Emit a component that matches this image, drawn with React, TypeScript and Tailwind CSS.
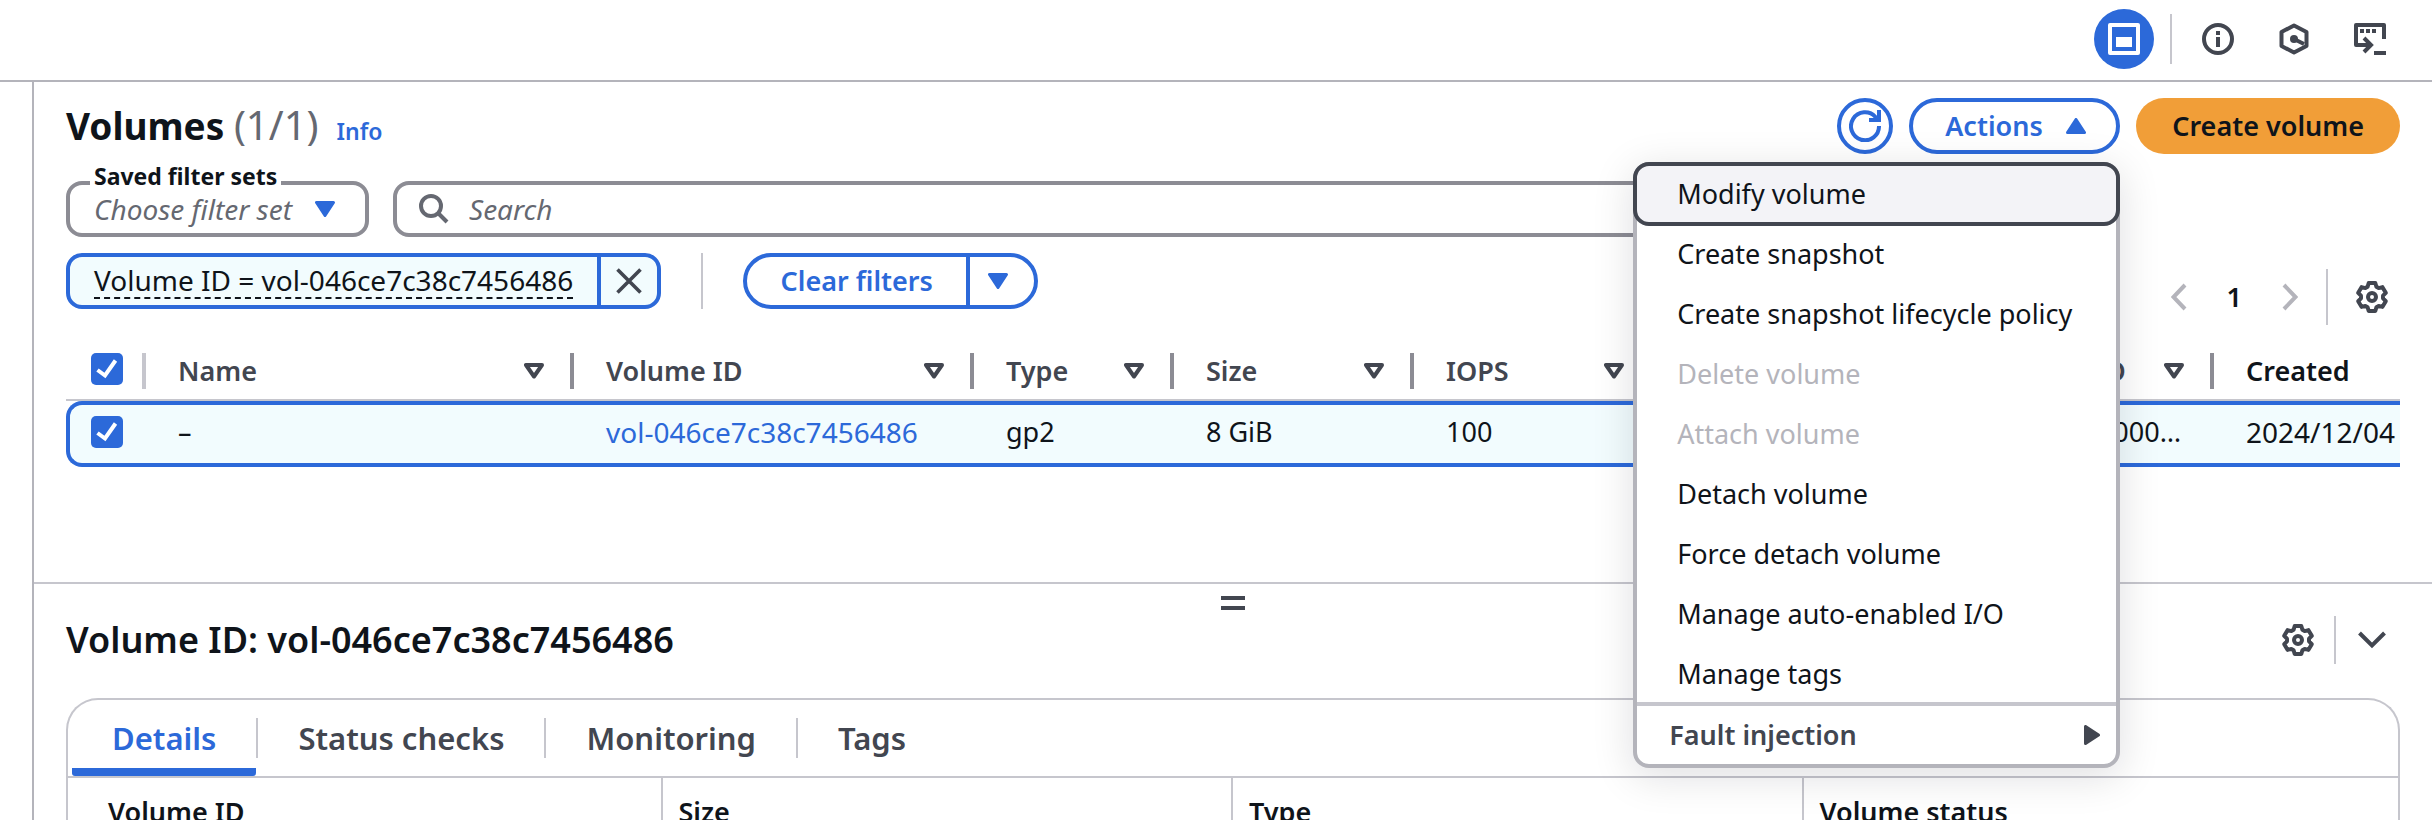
import React from "react";

type IconProps = { className?: string };

const gearPoints = Array.from({ length: 6 }, (_, i) => {
  const a = (i * Math.PI) / 3;
  return [
    [-4.4, -10.2],
    [-3.3, -14],
    [3.3, -14],
    [4.4, -10.2],
  ]
    .map(([x, y]) => {
      const px = 16 + x * Math.cos(a) - y * Math.sin(a);
      const py = 16 + x * Math.sin(a) + y * Math.cos(a);
      return `${px.toFixed(2)},${py.toFixed(2)}`;
    })
    .join(" ");
}).join(" ");

const GearIcon = () => (
  <svg viewBox="0 0 32 32" className="size-8" fill="none" stroke="currentColor" strokeWidth="4" strokeLinejoin="round">
    <polygon points={gearPoints} />
    <circle cx="16" cy="16" r="4" />
  </svg>
);

const Caret = ({ className = "" }: IconProps) => (
  <svg viewBox="0 0 20 16" className={`h-4 w-5 shrink-0 ${className}`} fill="currentColor" stroke="currentColor" strokeWidth="3" strokeLinejoin="round">
    <path d="M1.5 1.5H18.5L10 14.5Z" />
  </svg>
);

const SortIcon = () => (
  <svg viewBox="0 0 20 16" className="h-4 w-5 shrink-0" fill="none" stroke="currentColor" strokeWidth="4" strokeLinejoin="round">
    <path d="M2 2H18L10 13.5Z" />
  </svg>
);

const WindowIcon = () => (
  <svg viewBox="0 0 32 32" className="size-8" fill="none" stroke="currentColor" strokeWidth="4" strokeLinejoin="round">
    <path d="M2 2H30V30H2Z" />
    <path d="M8 14H24V24H8Z" fill="currentColor" stroke="none" />
  </svg>
);

const InfoIcon = () => (
  <svg viewBox="0 0 32 32" className="size-8" fill="none" stroke="currentColor" strokeWidth="4">
    <circle cx="16" cy="16" r="14" />
    <path d="M16 14V24M16 8V12" />
  </svg>
);

const HexagonIcon = () => (
  <svg viewBox="0 0 32 32" className="size-8" fill="none" stroke="currentColor" strokeWidth="4" strokeLinejoin="round">
    <path d="M16 2.5L28.5 9V23L16 29.5L3.5 23V9Z" />
    <circle cx="16" cy="16" r="4" fill="currentColor" stroke="none" />
    <path d="M16 16L26 21" />
  </svg>
);

const ShellIcon = () => (
  <svg viewBox="0 0 32 32" className="size-8" fill="none" stroke="currentColor" strokeWidth="4">
    <path d="M30 16V2H2V22H17" strokeLinejoin="round" />
    <path d="M10 15L17 22L10 29M20 30H32" />
    <path d="M6 8H10M12 8H16M18 8H22" />
  </svg>
);

const RefreshIcon = () => (
  <svg viewBox="0 0 32 32" className="size-8" fill="none" stroke="currentColor" strokeWidth="4">
    <path d="M30 16A14 14 0 1 1 26.5 7L29 10" />
    <path d="M30 0V10H20" />
  </svg>
);

const SearchIcon = () => (
  <svg viewBox="0 0 30 30" className="size-[30px] shrink-0" fill="none" stroke="currentColor" strokeWidth="4">
    <circle cx="12" cy="12" r="10" />
    <path d="M19 19L28 28" />
  </svg>
);

const CloseIcon = () => (
  <svg viewBox="0 0 26 26" className="size-[26px]" fill="none" stroke="currentColor" strokeWidth="3.6">
    <path d="M1.5 1.5L24.5 24.5M24.5 1.5L1.5 24.5" />
  </svg>
);

const Chevron = ({ className = "" }: IconProps) => (
  <svg viewBox="0 0 16 28" className={`h-7 w-4 ${className}`} fill="none" stroke="currentColor" strokeWidth="4">
    <path d="M14 2L2.5 14L14 26" />
  </svg>
);

const ChevronDown = () => (
  <svg viewBox="0 0 28 18" className="h-[18px] w-7" fill="none" stroke="currentColor" strokeWidth="4">
    <path d="M1.5 2L14 14.5L26.5 2" />
  </svg>
);

const Rule = ({ className = "" }: IconProps) => <span className={`w-0.5 bg-[#c6c6cd] ${className}`} />;

const Check = ({ label }: { label: string }) => (
  <span className="relative block size-8">
    <input type="checkbox" defaultChecked aria-label={label} className="block size-8 appearance-none rounded-[5px] bg-[#2c69d9]" />
    <svg viewBox="0 0 32 32" className="pointer-events-none absolute inset-0 size-8" fill="none" stroke="#fff" strokeWidth="4">
      <path d="M6.5 17L14 22.5L24.5 7.5" />
    </svg>
  </span>
);

const menuItems = [
  { label: "Create snapshot" },
  { label: "Create snapshot lifecycle policy" },
  { label: "Delete volume", disabled: true },
  { label: "Attach volume", disabled: true },
  { label: "Detach volume" },
  { label: "Force detach volume" },
  { label: "Manage auto-enabled I/O" },
  { label: "Manage tags" },
];

const ActionsMenu = () => (
  <ul
    role="menu"
    className="absolute top-full right-0 z-10 mt-2 w-[487px] rounded-2xl border-4 border-[#b4b4bb] bg-white text-[27px] text-[#0f141a] shadow-[0_8px_40px_2px_rgba(0,7,22,0.12)]"
  >
    <li role="none" className="-mx-1 -mt-1 -mb-0.5">
      <button role="menuitem" className="flex h-16 w-full items-center rounded-2xl border-4 border-[#424650] bg-[#f3f3f7] px-10">
        Modify volume
      </button>
    </li>
    {menuItems.map((item) => (
      <li role="none" key={item.label}>
        <button role="menuitem" disabled={item.disabled} className="flex h-[60px] w-full items-center px-10 whitespace-nowrap disabled:text-[#b4b4bb]">
          {item.label}
        </button>
      </li>
    ))}
    <li role="none" className="-mt-0.5 border-t-4 border-[#c6c6cd]">
      <button role="menuitem" className="flex h-[58px] w-full items-center justify-between pr-4 pl-8 font-semibold text-[#424650]">
        Fault injection
        <svg viewBox="0 0 16 20" className="h-5 w-4" fill="currentColor" stroke="currentColor" strokeWidth="3" strokeLinejoin="round">
          <path d="M1.5 1.5V18.5L14.5 10Z" />
        </svg>
      </button>
    </li>
  </ul>
);

const columns = ["Name", "Volume ID", "Type", "Size", "IOPS", "Throughput", "Snapshot ID"];

const VolumesTable = () => (
  <div className="mt-[18px] overflow-hidden">
    <table className="w-[2448px] table-fixed border-separate border-spacing-0 text-left text-[27px]">
      <colgroup>
        <col className="w-20" />
        <col className="w-[428px]" />
        <col className="w-[400px]" />
        <col className="w-[200px]" />
        <col className="w-60" />
        <col className="w-60" />
        <col className="w-[280px]" />
        <col className="w-[280px]" />
        <col className="w-[300px]" />
      </colgroup>
      <thead className="text-[#424650]">
        <tr>
          <th className="h-[58px] border-b-2 border-[#c6c6cd] p-0 pl-[25px]">
            <div className="flex h-9 items-start justify-between">
              <Check label="Select all volumes" />
              <span className="h-9 w-1 bg-[#c6c6cd]" />
            </div>
          </th>
          {columns.map((name) => (
            <th key={name} className="border-b-2 border-[#c6c6cd] p-0 pl-8 font-semibold">
              <div className="flex h-9 items-center">
                <span className="flex-1 whitespace-nowrap">{name}</span>
                <SortIcon />
                <span className="ml-[26px] h-9 w-1 bg-[#8c8c94]" />
              </div>
            </th>
          ))}
          <th className="border-b-2 border-[#c6c6cd] p-0 pl-8 font-semibold text-[#0f141a]">Created</th>
        </tr>
      </thead>
      <tbody>
        <tr className="[&>td]:h-[66px] [&>td]:border-y-4 [&>td]:border-[#2c69d9] [&>td]:bg-[#f2fcfe] [&>td]:pb-1">
          <td className="rounded-l-2xl border-l-4 pl-[21px]">
            <Check label="Select volume vol-046ce7c38c7456486" />
          </td>
          <td className="pl-8">–</td>
          <td className="pl-8 text-[28px] text-[#2c69d9]">
            <a href="#volume">vol-046ce7c38c7456486</a>
          </td>
          <td className="pl-8">gp2</td>
          <td className="pl-8">8 GiB</td>
          <td className="pl-8">100</td>
          <td className="pl-8">–</td>
          <td className="truncate pr-8 pl-8">snap-0000000000000000</td>
          <td className="pl-8 text-[28px] whitespace-nowrap">2024/12/04 10:00</td>
        </tr>
      </tbody>
    </table>
  </div>
);

const details = ["Volume ID", "Size", "Type", "Volume status"];
const tabs = ["Details", "Status checks", "Monitoring", "Tags"];

export default function App() {
  return (
    <div className="flex h-screen flex-col overflow-hidden bg-white font-['Noto_Sans',sans-serif] text-[27px] leading-9 text-[#0f141a]">
      <header className="flex shrink-0 items-center justify-end border-b-2 border-[#b4b4bb] pt-[9px] pr-[46px] pb-[11px] text-[#424650]">
        <button aria-label="Console panel" className="grid size-[60px] place-items-center rounded-full bg-[#2c69d9] text-white">
          <WindowIcon />
        </button>
        <Rule className="ml-4 h-[50px]" />
        <div className="ml-[30px] flex gap-11">
          <button aria-label="Information"><InfoIcon /></button>
          <button aria-label="Security"><HexagonIcon /></button>
          <button aria-label="Shell"><ShellIcon /></button>
        </div>
      </header>

      <div className="flex min-h-0 flex-1 pl-8">
        <main className="min-w-0 flex-1 border-l-2 border-[#b4b4bb]">
          <section className="h-[500px] px-8 pt-4">
            <div className="flex h-14 items-center justify-between">
              <h1 className="pt-1 text-[37px] leading-[56px] font-bold whitespace-nowrap">
                Volumes <span className="text-[40px] font-normal text-[#656871]">(1/1)</span>
                <a href="#info" className="ml-[18px] text-[23px] font-semibold text-[#2c69d9]">Info</a>
              </h1>
              <div className="flex gap-4 font-semibold">
                <button aria-label="Refresh" className="grid size-14 place-items-center rounded-full border-4 border-[#2c69d9] text-[#2c69d9]">
                  <RefreshIcon />
                </button>
                <div className="relative">
                  <button aria-expanded="true" className="flex h-14 w-[211px] items-center justify-between rounded-full border-4 border-[#2c69d9] pr-[30px] pl-8 text-[#2c69d9]">
                    Actions
                    <Caret className="rotate-180" />
                  </button>
                  <div className="font-normal">
                    <ActionsMenu />
                  </div>
                </div>
                <button className="h-14 rounded-full bg-[#f19e38] px-9 whitespace-nowrap">Create volume</button>
              </div>
            </div>

            <div className="mt-[27px] flex items-end justify-between">
              <div className="mb-4 flex flex-col gap-4">
                <div className="flex gap-6">
                  <div className="relative w-[303px] text-[#656871]">
                    <label htmlFor="filter-set" className="absolute -top-[23px] left-6 bg-white px-1 text-[23px] font-bold whitespace-nowrap text-[#0f141a]">
                      Saved filter sets
                    </label>
                    <select id="filter-set" className="h-14 w-full appearance-none rounded-2xl border-4 border-[#8c8c94] pl-6 text-[28px] italic">
                      <option>Choose filter set</option>
                    </select>
                    <Caret className="pointer-events-none absolute top-5 right-[34px] text-[#2c69d9]" />
                  </div>
                  <div className="flex h-14 w-[1500px] items-center gap-5 rounded-2xl border-4 border-[#8c8c94] px-[22px] text-[#656871]">
                    <SearchIcon />
                    <input aria-label="Search" placeholder="Search" className="min-w-0 flex-1 text-[28px] italic outline-none placeholder:text-[#656871]" />
                  </div>
                </div>
                <div className="flex">
                  <div className="flex h-14 rounded-2xl border-4 border-[#2c69d9] bg-[#f2fcfe]">
                    <span className="flex items-center border-r-4 border-[#2c69d9] px-6">
                      <button className="h-9 border-b-2 border-dashed border-[#0f141a] text-[28px] leading-8 whitespace-nowrap">
                        Volume ID = vol-046ce7c38c7456486
                      </button>
                    </span>
                    <button aria-label="Remove filter" className="grid w-14 place-items-center text-[#424650]">
                      <CloseIcon />
                    </button>
                  </div>
                  <Rule className="mx-10 h-14" />
                  <div className="flex h-14 rounded-full border-4 border-[#2c69d9] font-semibold text-[#2c69d9]">
                    <button className="w-[223px] border-r-4 border-[#2c69d9] whitespace-nowrap">Clear filters</button>
                    <button aria-label="More filter options" className="pr-[26px] pl-[18px]">
                      <Caret />
                    </button>
                  </div>
                </div>
              </div>
              <nav aria-label="Pages" className="flex h-14 items-center pr-3 text-[#b4b4bb]">
                <button aria-label="Previous page"><Chevron /></button>
                <button className="mx-10 font-semibold text-[#0f141a]">1</button>
                <button aria-label="Next page"><Chevron className="rotate-180" /></button>
                <Rule className="mr-7 ml-7 h-14" />
                <button aria-label="Preferences" className="text-[#424650]"><GearIcon /></button>
              </nav>
            </div>

            <VolumesTable />
          </section>

          <section className="relative border-t-2 border-[#c6c6cd] px-8 pt-8">
            <button aria-label="Resize panel" className="absolute top-3 left-1/2 flex w-6 -translate-x-1/2 flex-col gap-1.5">
              <span className="h-1 bg-[#424650]" />
              <span className="h-1 bg-[#424650]" />
            </button>
            <div className="flex h-12 items-center justify-between">
              <h2 className="text-[36px] font-semibold">Volume ID: vol-046ce7c38c7456486</h2>
              <div className="flex items-center pr-3.5 text-[#424650]">
                <button aria-label="Panel preferences"><GearIcon /></button>
                <Rule className="mr-[22px] ml-5 h-12" />
                <button aria-label="Close panel"><ChevronDown /></button>
              </div>
            </div>

            <div className="mt-[34px] rounded-t-[32px] border-2 border-b-0 border-[#c6c6cd]">
              <div role="tablist" className="flex h-[78px] border-b-2 border-[#c6c6cd] pl-1 text-[31px] font-semibold text-[#424650]">
                {tabs.map((tab, i) => (
                  <div key={tab} className="flex items-center">
                    <button
                      role="tab"
                      aria-selected={i === 0}
                      className={
                        i === 0
                          ? "h-full rounded-[3px] border-b-8 border-[#2c69d9] px-10 pt-2 text-[#2c69d9]"
                          : "h-full px-10 whitespace-nowrap"
                      }
                    >
                      {tab}
                    </button>
                    {i < tabs.length - 1 && <Rule className="h-10" />}
                  </div>
                ))}
              </div>
              <dl className="grid grid-cols-4 gap-x-8 px-10">
                {details.map((name, i) => (
                  <div key={name} className={i === 0 ? "h-32 pt-4" : "-ml-[18px] h-32 border-l-2 border-[#c6c6cd] pt-4 pl-4"}>
                    <dt className="font-semibold">{name}</dt>
                  </div>
                ))}
              </dl>
            </div>
          </section>
        </main>
      </div>
    </div>
  );
}
